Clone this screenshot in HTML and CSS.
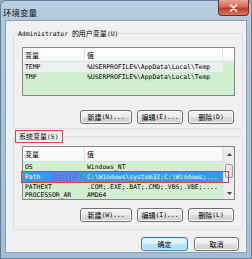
FILE: index.html
```html
<!DOCTYPE html>
<html lang="zh-CN">
<head>
<meta charset="utf-8">
<title>环境变量</title>
<link rel="stylesheet" href="styles.css">
</head>
<body>
<div class="window">
  <div class="titlebar">
    <span class="title">环境变量</span>
    <span class="close"><svg width="9" height="8" viewBox="0 0 9 8"><path d="M1.5 1 L7.5 7 M7.5 1 L1.5 7" stroke="#fff" stroke-width="1.7" stroke-linecap="round"/></svg></span>
  </div>
  <div class="client">
    <fieldset class="group g-user">
      <legend class="lg-user">Administrator <span class="zh">的用户变量</span>(U)</legend>
      <div class="list list-user">
        <div class="head">
          <span class="c1 zh">变量</span><span class="c2 zh">值</span><span class="c3"></span>
        </div>
        <div class="row soft"><span class="c1">TEMP</span><span class="c2">%USERPROFILE%\AppData\Local\Temp</span></div>
        <div class="row"><span class="c1">TMP</span><span class="c2">%USERPROFILE%\AppData\Local\Temp</span></div>
      </div>
      <div class="btns">
        <button class="btn b-new"><span class="zh">新建</span>(N)...</button>
        <button class="btn b-ed"><span class="zh">编辑</span>(E)...</button>
        <button class="btn b-ed"><span class="zh">删除</span>(D)</button>
      </div>
    </fieldset>
    <fieldset class="group g-sys">
      <legend class="lg-sys"><span class="mark"><span class="zh">系统变量</span>(S)</span></legend>
      <div class="list list-sys">
        <div class="main">
          <div class="head">
            <span class="c1 zh">变量</span><span class="c2 zh">值</span>
          </div>
          <div class="row"><span class="c1">OS</span><span class="c2">Windows_NT</span></div>
          <div class="row sel"><span class="c1">Path<span class="note zh">双击打开</span></span><span class="c2">C:\Windows\system32;C:\Windows;...</span></div>
          <div class="row"><span class="c1">PATHEXT</span><span class="c2">.COM;.EXE;.BAT;.CMD;.VBS;.VBE;....</span></div>
          <div class="row last"><span class="c1">PROCESSOR_AR</span><span class="c2">AMD64</span></div>
        </div>
        <div class="vscroll">
          <span class="arr up"><svg width="5" height="3" viewBox="0 0 5 3"><path d="M0 3 L2.5 0 L5 3 Z" fill="#444"/></svg></span>
          <span class="track"><span class="thumb"></span></span>
          <span class="arr down"><svg width="5" height="3" viewBox="0 0 5 3"><path d="M0 0 L2.5 3 L5 0 Z" fill="#444"/></svg></span>
        </div>
      </div>
      <div class="btns btns-sys">
        <button class="btn b-new"><span class="zh">新建</span>(W)...</button>
        <button class="btn b-ed"><span class="zh">编辑</span>(I)...</button>
        <button class="btn b-ed"><span class="zh">删除</span>(L)</button>
      </div>
    </fieldset>
    <div class="footer">
      <button class="btn b-ok default"><span class="zh">确定</span></button>
      <button class="btn b-cancel"><span class="zh">取消</span></button>
    </div>
  </div>
</div>
</body>
</html>
```

FILE: styles.css
```css
* { box-sizing: border-box; }
html, body { margin: 0; padding: 0; }
body {
  width: 252px;
  height: 259px;
  overflow: hidden;
  background: #8fabc4;
  font-family: "DejaVu Sans Mono", "Liberation Mono", "Noto Sans CJK SC", monospace;
  font-size: 6.4px;
  color: #000;
}
.zh { font-family: "Noto Sans CJK SC", sans-serif; font-size: 7px; }

.window {
  width: 252px;
  height: 259px;
  display: flex;
  flex-direction: column;
  background: linear-gradient(#bcd1e3, #aec7dc 20px, #a3bed6);
  border: 1px solid #5f7e99;
  border-radius: 6px 6px 0 0;
  padding: 0 4px 5px 4px;
}
.titlebar {
  height: 19px;
  display: flex;
  align-items: center;
}
.title {
  margin-left: -2px;
  font-family: "Noto Sans CJK SC", sans-serif;
  font-size: 8.5px;
  color: #111;
  align-self: center;
  margin-top: 2px;
}
.close {
  margin-left: auto;
  margin-right: -2px;
  align-self: flex-start;
  margin-top: -1px;
  width: 31px;
  height: 16px;
  border: 1px solid #6e2b22;
  border-top: none;
  border-radius: 0 0 4px 4px;
  background: linear-gradient(#e7a594, #d56a55 45%, #c1392a 55%, #d67b63);
  display: flex;
  align-items: center;
  justify-content: center;
}

.client {
  flex: 1;
  background: #f0f0f0;
  border: 1px solid #8aa0b5;
  display: flex;
  flex-direction: column;
}

.group {
  margin: 0 3px 0 7px;
  border: 1px solid #d5dfe5;
  border-radius: 3px;
  padding: 0 7px 0 8px;
  min-width: 0;
}
.g-user { margin-top: 7px; padding-top: 8px; padding-bottom: 4px; }
.g-sys { margin-top: 1px; padding-top: 3px; padding-bottom: 7px; }

legend {
  line-height: 10px;
  padding: 0 1px;
}
.lg-user { margin-left: -5px; }
.lg-sys { margin-left: -7px; padding: 0; }
.mark {
  display: block;
  border: 1px solid #d8444a;
  padding: 0 3px;
  line-height: 10px;
}

.list {
  border: 1px solid #828790;
  background: #d2eed0;
}
.list-user { height: 49px; }
.list-sys {
  height: 54px;
  display: grid;
  grid-template-columns: 200px 11px;
}

.head {
  display: flex;
  height: 14px;
  background: linear-gradient(#ffffff, #f6f7f8);
  border-bottom: 1px solid #d8dde2;
}
.list-sys .head { height: 15px; }
.head span {
  display: flex;
  align-items: center;
  padding-left: 2px;
}
.head .c1 { width: 62px; border-right: 1px solid #e3e6e9; }
.head .c2 { width: 138px; border-right: 1px solid #e3e6e9; }
.head .c3 { width: 11px; }

.row {
  display: flex;
  height: 10px;
  line-height: 10px;
  white-space: nowrap;
  position: relative;
}
.row .c1 { width: 62px; padding-left: 2px; overflow: hidden; display: flex; }
.row .c2 { width: 138px; padding-left: 2px; overflow: hidden; }
.row.soft { background: #edf1ed; width: 200px; }
.row.last { height: 7px; line-height: 7px; }
.row.sel { background: #3399ff; color: #fff; }
.row.sel::after {
  content: "";
  position: absolute;
  left: -2px;
  right: -6px;
  top: -1px;
  bottom: -1px;
  border: 1px solid #e0403c;
}
.note {
  margin-left: 11px;
  color: #d8336a;
}

.vscroll {
  display: flex;
  flex-direction: column;
  background: #ececec;
  border-left: 1px solid #e2e2e2;
}
.arr {
  display: flex;
  align-items: center;
  justify-content: center;
}
.arr.up { height: 15px; }
.arr.down { height: 11px; margin-top: auto; }
.track { display: block; padding-top: 2px; }
.thumb {
  display: block;
  margin: 0 1px;
  height: 14px;
  border: 1px solid #9aa0a6;
  border-radius: 2px;
  background: linear-gradient(90deg, #f2f2f2, #dcdcdc);
}

.btns {
  display: flex;
  justify-content: flex-end;
  gap: 5px;
  padding-right: 1px;
}
.g-user .btns { margin-top: 14px; }
.btns-sys { margin-top: 8px; }

.btn {
  height: 14px;
  padding: 0;
  margin: 0;
  border: 1px solid #707070;
  border-radius: 3px;
  background: linear-gradient(#f3f3f3, #ebebeb 50%, #dddddd 51%, #cfcfcf);
  box-shadow: inset 0 0 0 1px #fbfbfb;
  font-family: "DejaVu Sans Mono", "Liberation Mono", "Noto Sans CJK SC", monospace;
  font-size: 6.4px;
  color: #000;
  line-height: 12px;
  display: flex;
  align-items: center;
  justify-content: center;
  white-space: nowrap;
}
.b-new { width: 52px; }
.b-ed { width: 46px; }
.b-ok { width: 47px; }
.b-cancel { width: 45px; }
.default {
  border-color: #3c7fb1;
  background: linear-gradient(#eaf6fd, #d9f0fc 50%, #bee6fd 51%, #a7d9f5);
  box-shadow: inset 0 0 0 1px #c7ecfd;
}

.footer {
  display: flex;
  justify-content: flex-end;
  gap: 6px;
  margin: 7px 7px 0 0;
}
```
